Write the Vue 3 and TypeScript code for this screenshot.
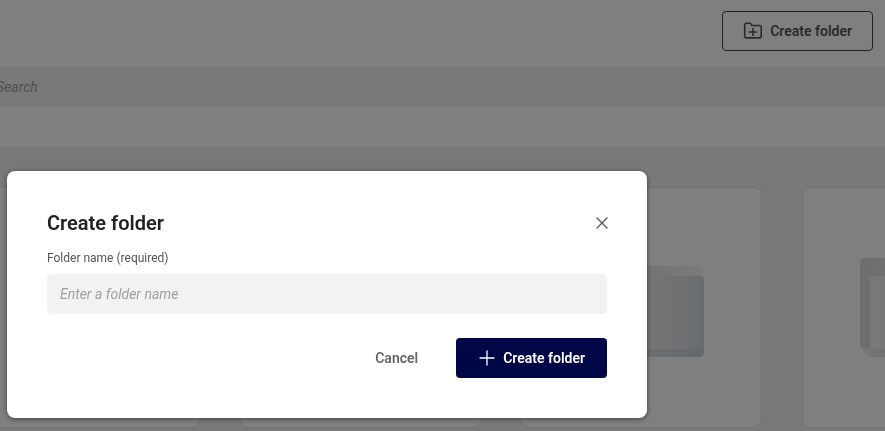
<script setup lang="ts">
import { ref } from 'vue'

const search = ref('')
const folderName = ref('')
const open = ref(true)
const folders: number[] = [1, 2, 3, 4]

function close(): void {
  open.value = false
}
</script>

<template>
  <div class="page">
    <header class="toolbar">
      <button class="btn outline" type="button" @click="open = true">
        <svg class="icon" width="20" height="20" viewBox="0 0 20 20" fill="none" stroke="currentColor" stroke-width="1.6" stroke-linecap="round" stroke-linejoin="round" aria-hidden="true">
          <path d="M1.7 3.7q0-1.4 1.4-1.4h3.6q.8 0 1.2.6l.8 1.2q.3.4.9.4h7.1q1.5 0 1.5 1.5v9.5q0 1.4-1.4 1.4H3.1q-1.4 0-1.4-1.4z" />
          <path d="M10 7.5v7M6.5 11h7" />
        </svg>
        <span>Create folder</span>
      </button>
    </header>

    <div class="search">
      <input v-model="search" type="search" placeholder="Search" aria-label="Search" />
    </div>

    <main class="content">
      <ul class="grid">
        <li v-for="id in folders" :key="id" class="card">
          <svg width="125" height="99" viewBox="0 0 125 99" aria-hidden="true">
            <defs>
              <linearGradient :id="`back-${id}`">
                <stop offset="0" stop-color="#d8dde0" />
                <stop offset=".5" stop-color="#e4e5e8" />
                <stop offset="1" stop-color="#f7f7f8" />
              </linearGradient>
              <linearGradient :id="`front-${id}`">
                <stop offset="0" stop-color="#f1f2f4" />
                <stop offset=".5" stop-color="#eaebee" />
                <stop offset=".75" stop-color="#e0e2e5" />
                <stop offset="1" stop-color="#d0d8dc" />
              </linearGradient>
              <linearGradient :id="`base-${id}`">
                <stop offset="0" stop-color="#f3f3f4" />
                <stop offset=".12" stop-color="#e4e5e9" />
                <stop offset=".6" stop-color="#d9dde1" />
                <stop offset="1" stop-color="#c8d0d4" />
              </linearGradient>
            </defs>
            <path d="M2 90h123v3q0 6-6 6H12q-7 0-10-9z" :fill="`url(#base-${id})`" />
            <path d="M5 0h43q4 0 6 4l2 4h62q7 0 7 7v76H5q-5 0-5-5V5q0-5 5-5z" :fill="`url(#back-${id})`" />
            <path d="M15 18h105q5 0 5 5v68H10V23q0-5 5-5z" :fill="`url(#front-${id})`" />
          </svg>
        </li>
      </ul>
    </main>

    <div v-if="open" class="overlay">
      <form class="modal" role="dialog" aria-modal="true" aria-labelledby="modal-title" @submit.prevent="close">
        <div class="modal-head">
          <h2 id="modal-title">Create folder</h2>
          <button class="close" type="button" aria-label="Close" @click="close">
            <svg width="12" height="12" viewBox="0 0 12 12" fill="none" stroke="currentColor" stroke-width="1.3" stroke-linecap="round" aria-hidden="true">
              <path d="M1 1l10 10M11 1L1 11" />
            </svg>
          </button>
        </div>
        <label for="folder-name">Folder name (required)</label>
        <input id="folder-name" v-model="folderName" class="field" type="text" required placeholder="Enter a folder name" />
        <div class="actions">
          <button class="btn text" type="button" @click="close">Cancel</button>
          <button class="btn primary" type="submit">
            <svg class="icon" width="16" height="16" viewBox="0 0 16 16" fill="none" stroke="currentColor" stroke-width="1.3" stroke-linecap="round" aria-hidden="true">
              <path d="M8 1v14M1 8h14" />
            </svg>
            <span>Create folder</span>
          </button>
        </div>
      </form>
    </div>
  </div>
</template>

<style>
body {
  overflow: hidden;
}
</style>

<style scoped>
.page {
  display: flex;
  flex-direction: column;
  min-height: 100vh;
  overflow: hidden;
  background: #fff;
  color: #222;
  font-family: Roboto, "Liberation Sans", sans-serif;
  font-size: 14px;
  line-height: 20px;
}

button,
input {
  box-sizing: border-box;
  margin: 0;
  border: 0;
  font: inherit;
}

button {
  cursor: pointer;
}

.toolbar {
  display: flex;
  justify-content: flex-end;
  padding: 11px 12px 16px;
}

.btn {
  display: flex;
  align-items: center;
  justify-content: center;
  height: 40px;
  padding: 0 20px;
  border-radius: 4px;
  background: transparent;
  font-weight: 600;
}

.icon {
  flex: none;
}

.outline {
  gap: 7px;
  border: 1px solid #444;
  color: #555;
}

.search {
  height: 40px;
  margin-bottom: 40px;
  margin-left: -16px;
  background: #f2f2f2;
}

.search input {
  width: 100%;
  height: 100%;
  padding: 0 12px;
  background: transparent;
}

input::placeholder {
  color: #a0a0a0;
  font-style: italic;
  opacity: 1;
}

.content {
  flex: 1;
  padding-top: 40px;
  background: #f2f2f2;
}

.grid {
  display: grid;
  grid-template-columns: repeat(4, 241px);
  gap: 40px;
  margin: 0 0 0 -41px;
  padding: 0;
  list-style: none;
}

.card {
  display: flex;
  align-items: center;
  justify-content: center;
  box-sizing: border-box;
  height: 241px;
  border: 1px solid #e6e6e6;
  border-radius: 8px;
  background: #fff;
}

.overlay {
  position: fixed;
  inset: 0;
  padding: 171px 7px 0;
  background: rgba(0, 0, 0, 0.5);
}

.modal {
  box-sizing: border-box;
  max-width: 640px;
  padding: 40px;
  border-radius: 8px;
  background: #fff;
  box-shadow: 0 1px 5px rgba(0, 0, 0, 0.5);
}

.modal-head {
  display: flex;
  align-items: center;
  justify-content: space-between;
  height: 24px;
  margin-bottom: 12px;
}

h2 {
  margin: 0;
  font-size: 20px;
  font-weight: 600;
  line-height: 24px;
}

.close {
  display: flex;
  align-items: center;
  justify-content: center;
  width: 24px;
  height: 24px;
  margin-right: -7px;
  padding: 0;
  background: transparent;
  color: #555;
}

label {
  display: block;
  margin-bottom: 5px;
  color: #555;
  font-size: 12px;
  line-height: 22px;
}

.field {
  display: block;
  width: 100%;
  height: 40px;
  padding: 0 13px;
  border-radius: 4px;
  background: #f2f2f2;
}

.actions {
  display: flex;
  justify-content: flex-end;
  gap: 18px;
  margin-top: 24px;
}

.text {
  color: #666;
}

.primary {
  gap: 8px;
  padding: 0 22px 0 23px;
  background: #000746;
  color: #fff;
}
</style>
